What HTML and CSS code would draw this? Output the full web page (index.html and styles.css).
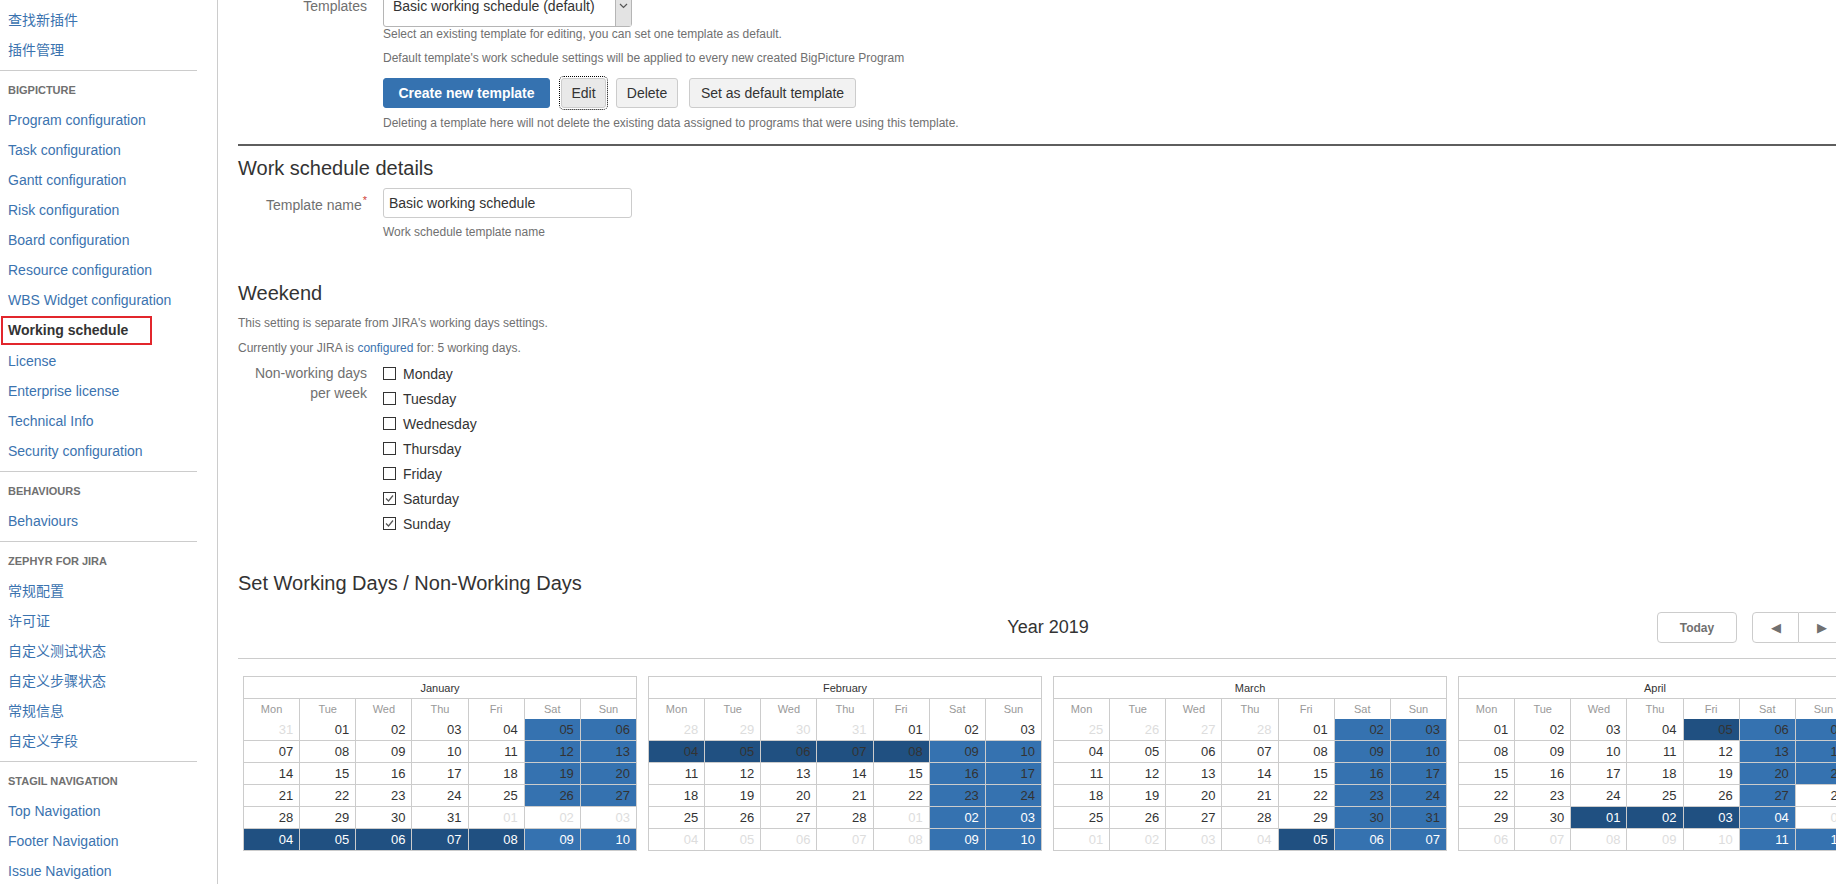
FILE: index.html
```html
<!DOCTYPE html>
<html lang="en">
<head>
<meta charset="utf-8">
<title>Working schedule</title>
<link rel="stylesheet" href="styles.css">
</head>
<body>
<div class="page">
  <nav class="sidebar">
    <div class="nav-item"><a href="#">查找新插件</a></div>
    <div class="nav-item"><a href="#">插件管理</a></div>
    <div class="nav-sep"></div>
    <div class="nav-heading">BIGPICTURE</div>
    <div class="nav-item"><a href="#">Program configuration</a></div>
    <div class="nav-item"><a href="#">Task configuration</a></div>
    <div class="nav-item"><a href="#">Gantt configuration</a></div>
    <div class="nav-item"><a href="#">Risk configuration</a></div>
    <div class="nav-item"><a href="#">Board configuration</a></div>
    <div class="nav-item"><a href="#">Resource configuration</a></div>
    <div class="nav-item"><a href="#">WBS Widget configuration</a></div>
    <div class="nav-item active"><a href="#">Working schedule</a></div>
    <div class="nav-item"><a href="#">License</a></div>
    <div class="nav-item"><a href="#">Enterprise license</a></div>
    <div class="nav-item"><a href="#">Technical Info</a></div>
    <div class="nav-item"><a href="#">Security configuration</a></div>
    <div class="nav-sep"></div>
    <div class="nav-heading">BEHAVIOURS</div>
    <div class="nav-item"><a href="#">Behaviours</a></div>
    <div class="nav-sep"></div>
    <div class="nav-heading">ZEPHYR FOR JIRA</div>
    <div class="nav-item"><a href="#">常规配置</a></div>
    <div class="nav-item"><a href="#">许可证</a></div>
    <div class="nav-item"><a href="#">自定义测试状态</a></div>
    <div class="nav-item"><a href="#">自定义步骤状态</a></div>
    <div class="nav-item"><a href="#">常规信息</a></div>
    <div class="nav-item"><a href="#">自定义字段</a></div>
    <div class="nav-sep"></div>
    <div class="nav-heading">STAGIL NAVIGATION</div>
    <div class="nav-item"><a href="#">Top Navigation</a></div>
    <div class="nav-item"><a href="#">Footer Navigation</a></div>
    <div class="nav-item"><a href="#">Issue Navigation</a></div>
  </nav>

  <main class="main">
    <div class="form-row templates-row">
      <div class="label label-select">Templates</div>
      <div class="field">
        <div class="select">
          <span class="select-text">Basic working schedule (default)</span>
          <span class="select-arrow"><svg width="9" height="6" viewBox="0 0 9 6"><path d="M1 1 L4.5 4.5 L8 1" fill="none" stroke="#555" stroke-width="1.2"/></svg></span>
        </div>
        <p class="desc d1">Select an existing template for editing, you can set one template as default.</p>
        <p class="desc d2">Default template's work schedule settings will be applied to every new created BigPicture Program</p>
        <div class="buttons">
          <button class="btn btn-primary">Create new template</button>
          <button class="btn btn-focus">Edit</button>
          <button class="btn btn-delete">Delete</button>
          <button class="btn btn-default">Set as default template</button>
        </div>
        <p class="desc d3">Deleting a template here will not delete the existing data assigned to programs that were using this template.</p>
      </div>
    </div>

    <div class="rule"></div>

    <h2 class="h-details">Work schedule details</h2>
    <div class="form-row name-row">
      <div class="label">Template name<span class="req">*</span></div>
      <div class="field">
        <div class="input">Basic working schedule</div>
      </div>
    </div>
    <div class="form-row">
      <div class="label"></div>
      <div class="field"><p class="desc d-name">Work schedule template name</p></div>
    </div>

    <h2 class="h-weekend">Weekend</h2>
    <p class="desc d-sep">This setting is separate from JIRA's working days settings.</p>
    <p class="desc d-cur">Currently your JIRA is <a href="#">configured</a> for: 5 working days.</p>

    <div class="form-row days-row">
      <div class="label label-days">Non-working days per week</div>
      <div class="field checklist">
        <div class="check"><span class="box"></span>Monday</div>
        <div class="check"><span class="box"></span>Tuesday</div>
        <div class="check"><span class="box"></span>Wednesday</div>
        <div class="check"><span class="box"></span>Thursday</div>
        <div class="check"><span class="box"></span>Friday</div>
        <div class="check"><span class="box"><svg width="11" height="11" viewBox="0 0 11 11"><path d="M2 5.5 L4.5 8 L9 2.5" fill="none" stroke="#555" stroke-width="1.2"/></svg></span>Saturday</div>
        <div class="check"><span class="box"><svg width="11" height="11" viewBox="0 0 11 11"><path d="M2 5.5 L4.5 8 L9 2.5" fill="none" stroke="#555" stroke-width="1.2"/></svg></span>Sunday</div>
      </div>
    </div>

    <h2 class="h-set">Set Working Days / Non-Working Days</h2>

    <div class="year-header">
      <div></div>
      <div class="year-title">Year 2019</div>
      <div class="year-tools">
        <button class="tbtn today">Today</button>
        <div class="navgrp">
          <button class="tbtn arrow">&#9664;</button>
          <button class="tbtn arrow">&#9654;</button>
        </div>
      </div>
    </div>
    <div class="thin-rule"></div>

    <div class="calendars">
      <table class="cal">
        <tr><th class="mname" colspan="7">January</th></tr>
        <tr class="wd"><th>Mon</th><th>Tue</th><th>Wed</th><th>Thu</th><th>Fri</th><th>Sat</th><th>Sun</th></tr>
        <tr class="r1"><td class="o">31</td><td>01</td><td>02</td><td>03</td><td>04</td><td class="w">05</td><td class="w">06</td></tr>
        <tr><td>07</td><td>08</td><td>09</td><td>10</td><td>11</td><td class="w">12</td><td class="w">13</td></tr>
        <tr><td>14</td><td>15</td><td>16</td><td>17</td><td>18</td><td class="w">19</td><td class="w">20</td></tr>
        <tr><td>21</td><td>22</td><td>23</td><td>24</td><td>25</td><td class="w">26</td><td class="w">27</td></tr>
        <tr><td>28</td><td>29</td><td>30</td><td>31</td><td class="o">01</td><td class="o">02</td><td class="o">03</td></tr>
        <tr><td class="o h">04</td><td class="o h">05</td><td class="o h">06</td><td class="o h">07</td><td class="o h">08</td><td class="o w">09</td><td class="o w">10</td></tr>
      </table>
      <table class="cal">
        <tr><th class="mname" colspan="7">February</th></tr>
        <tr class="wd"><th>Mon</th><th>Tue</th><th>Wed</th><th>Thu</th><th>Fri</th><th>Sat</th><th>Sun</th></tr>
        <tr class="r1"><td class="o">28</td><td class="o">29</td><td class="o">30</td><td class="o">31</td><td>01</td><td>02</td><td>03</td></tr>
        <tr><td class="h">04</td><td class="h">05</td><td class="h">06</td><td class="h">07</td><td class="h">08</td><td class="w">09</td><td class="w">10</td></tr>
        <tr><td>11</td><td>12</td><td>13</td><td>14</td><td>15</td><td class="w">16</td><td class="w">17</td></tr>
        <tr><td>18</td><td>19</td><td>20</td><td>21</td><td>22</td><td class="w">23</td><td class="w">24</td></tr>
        <tr><td>25</td><td>26</td><td>27</td><td>28</td><td class="o">01</td><td class="o w">02</td><td class="o w">03</td></tr>
        <tr><td class="o">04</td><td class="o">05</td><td class="o">06</td><td class="o">07</td><td class="o">08</td><td class="o w">09</td><td class="o w">10</td></tr>
      </table>
      <table class="cal">
        <tr><th class="mname" colspan="7">March</th></tr>
        <tr class="wd"><th>Mon</th><th>Tue</th><th>Wed</th><th>Thu</th><th>Fri</th><th>Sat</th><th>Sun</th></tr>
        <tr class="r1"><td class="o">25</td><td class="o">26</td><td class="o">27</td><td class="o">28</td><td>01</td><td class="w">02</td><td class="w">03</td></tr>
        <tr><td>04</td><td>05</td><td>06</td><td>07</td><td>08</td><td class="w">09</td><td class="w">10</td></tr>
        <tr><td>11</td><td>12</td><td>13</td><td>14</td><td>15</td><td class="w">16</td><td class="w">17</td></tr>
        <tr><td>18</td><td>19</td><td>20</td><td>21</td><td>22</td><td class="w">23</td><td class="w">24</td></tr>
        <tr><td>25</td><td>26</td><td>27</td><td>28</td><td>29</td><td class="w">30</td><td class="w">31</td></tr>
        <tr><td class="o">01</td><td class="o">02</td><td class="o">03</td><td class="o">04</td><td class="o h">05</td><td class="o w">06</td><td class="o w">07</td></tr>
      </table>
      <table class="cal">
        <tr><th class="mname" colspan="7">April</th></tr>
        <tr class="wd"><th>Mon</th><th>Tue</th><th>Wed</th><th>Thu</th><th>Fri</th><th>Sat</th><th>Sun</th></tr>
        <tr class="r1"><td>01</td><td>02</td><td>03</td><td>04</td><td class="h">05</td><td class="w">06</td><td class="w">07</td></tr>
        <tr><td>08</td><td>09</td><td>10</td><td>11</td><td>12</td><td class="w">13</td><td class="w">14</td></tr>
        <tr><td>15</td><td>16</td><td>17</td><td>18</td><td>19</td><td class="w">20</td><td class="w">21</td></tr>
        <tr><td>22</td><td>23</td><td>24</td><td>25</td><td>26</td><td class="w">27</td><td>28</td></tr>
        <tr><td>29</td><td>30</td><td class="o h">01</td><td class="o h">02</td><td class="o h">03</td><td class="o w">04</td><td class="o">05</td></tr>
        <tr><td class="o">06</td><td class="o">07</td><td class="o">08</td><td class="o">09</td><td class="o">10</td><td class="o w">11</td><td class="o w">12</td></tr>
      </table>
    </div>
  </main>
</div>
</body>
</html>
```
FILE: styles.css
```css
html, body {
  margin: 0;
  padding: 0;
  overflow: hidden;
  background: #fff;
}
body {
  font-family: "Liberation Sans", Arial, "Noto Sans CJK SC", sans-serif;
  font-size: 14px;
  color: #333;
}
a { color: #3b73af; text-decoration: none; }
p { margin: 0; }
h2 { margin: 0; font-weight: normal; font-size: 20px; line-height: 24px; color: #333; }

.page {
  display: flex;
  width: 1858px;
  min-height: 900px;
}

/* Sidebar */
.sidebar {
  flex: none;
  width: 217px;
  border-right: 1px solid #ccc;
  padding-top: 5px;
}
.nav-item {
  height: 30px;
  line-height: 30px;
  padding-left: 8px;
  white-space: nowrap;
}
.nav-item.active { padding-left: 1px; }
.nav-item.active a {
  display: block;
  box-sizing: border-box;
  width: 151px;
  height: 29px;
  margin-top: 1px;
  border: 2px solid #e2262c;
  padding-left: 5px;
  line-height: 25px;
  font-weight: bold;
  color: #333;
}
.nav-heading {
  height: 30px;
  line-height: 30px;
  padding-left: 8px;
  font-size: 11px;
  font-weight: bold;
  color: #707070;
}
.nav-sep {
  width: 197px;
  height: 5px;
  border-bottom: 1px solid #ccc;
  margin-bottom: 4px;
}

/* Main */
.main {
  flex: none;
  width: 1620px;
  padding-left: 20px;
}
.form-row { display: flex; align-items: flex-start; }
.label {
  flex: none;
  width: 129px;
  margin-right: 16px;
  text-align: right;
  color: #707070;
}
.field { flex: none; }

.templates-row { margin-top: -11px; }
.label-select { line-height: 32px; padding-top: 1px; }
.select {
  box-sizing: border-box;
  width: 249px;
  height: 38px;
  border: 1px solid #b5b5b5;
  border-radius: 3px;
  display: flex;
  align-items: stretch;
}
.select-text {
  flex: 1;
  padding-left: 9px;
  line-height: 32px;
  color: #333;
}
.select-arrow {
  flex: none;
  width: 16px;
  border-left: 1px solid #b5b5b5;
  background: #e3e3e3;
  display: flex;
  justify-content: center;
  padding-top: 13px;
  box-sizing: border-box;
}
.desc { font-size: 12px; line-height: 14px; color: #707070; }
.d1 { margin-top: 0; }
.d2 { margin-top: 10px; }
.buttons { display: flex; gap: 10px; margin-top: 13px; }
.btn {
  box-sizing: border-box;
  height: 30px;
  border: 1px solid #ccc;
  border-radius: 3px;
  background: #f2f2f2;
  color: #333;
  font-family: "Liberation Sans", Arial, sans-serif;
  font-size: 14px;
  padding: 0;
  text-align: center;
}
.btn-primary {
  width: 167px;
  background: #3572b0;
  border-color: #3572b0;
  color: #fff;
  font-weight: bold;
  margin-right: 1px;
}
.btn-focus {
  width: 45px;
  background: #e9e9e9;
  outline: 1px dotted #000;
  outline-offset: 1px;
}
.btn-delete { width: 62px; margin-right: 1px; }
.btn-default { width: 167px; }
.d3 { margin-top: 8px; }

.rule {
  height: 2px;
  background: #5e5e5e;
  margin-top: 14px;
}
.h-details { margin-top: 10px; }
.name-row { margin-top: 8px; align-items: center; }
.req { color: #d04437; font-size: 11px; vertical-align: 6px; margin-left: 1px; }
.input {
  box-sizing: border-box;
  width: 249px;
  height: 30px;
  border: 1px solid #ccc;
  border-radius: 3px;
  padding-left: 5px;
  line-height: 28px;
  color: #333;
}
.d-name { margin-top: 7px; }
.h-weekend { margin-top: 42px; }
.d-sep { margin-top: 11px; }
.d-cur { margin-top: 11px; }

.days-row { margin-top: 6px; }
.label-days { line-height: 20px; padding-top: 2px; }
.checklist { display: flex; flex-direction: column; }
.check {
  height: 25px;
  display: flex;
  align-items: center;
  color: #333;
}
.box {
  box-sizing: border-box;
  width: 13px;
  height: 13px;
  border: 1px solid #333;
  background: #fff;
  margin-right: 7px;
  display: flex;
  align-items: center;
  justify-content: center;
}
.h-set { margin-top: 35px; }

.year-header {
  display: grid;
  grid-template-columns: 1fr auto 1fr;
  align-items: center;
  margin-top: 17px;
  height: 31px;
}
.year-title { font-size: 18px; color: #333; }
.year-tools {
  display: flex;
  justify-content: flex-end;
  gap: 15px;
  padding-right: 12px;
}
.tbtn {
  box-sizing: border-box;
  height: 31px;
  background: #fff;
  border: 1px solid #ccc;
  color: #707070;
  font-family: "Liberation Sans", Arial, sans-serif;
  padding: 0;
}
.today {
  width: 80px;
  border-radius: 4px;
  font-size: 12px;
  font-weight: bold;
}
.navgrp { display: flex; }
.arrow {
  width: 47px;
  font-size: 13px;
  border-radius: 4px 0 0 4px;
}
.arrow + .arrow {
  border-left: none;
  border-radius: 0 4px 4px 0;
}
.thin-rule {
  height: 1px;
  background: #ccc;
  margin-top: 15px;
}

.calendars {
  display: flex;
  gap: 11px;
  padding-left: 5px;
  margin-top: 17px;
}
.cal {
  flex: none;
  width: 394px;
  border-collapse: collapse;
  table-layout: fixed;
  font-size: 13px;
}
.cal th, .cal td {
  border: 1px solid #ccc;
  padding: 0;
}
.cal .mname {
  height: 21px;
  font-size: 11px;
  font-weight: normal;
  color: #333;
  text-align: center;
}
.cal .wd th {
  height: 20px;
  font-size: 11px;
  font-weight: normal;
  color: #999;
  text-align: center;
  border-bottom: none;
}
.cal tr.r1 td { border-top: none; }
.cal td {
  height: 21px;
  text-align: right;
  padding-right: 6px;
  color: #333;
  background: #fff;
}
.cal td.o { color: #ddd; }
.cal td.w { background: #3572b0; }
.cal td.h { background: #205081; }
.cal td.o.w, .cal td.o.h { color: #fff; }
```
